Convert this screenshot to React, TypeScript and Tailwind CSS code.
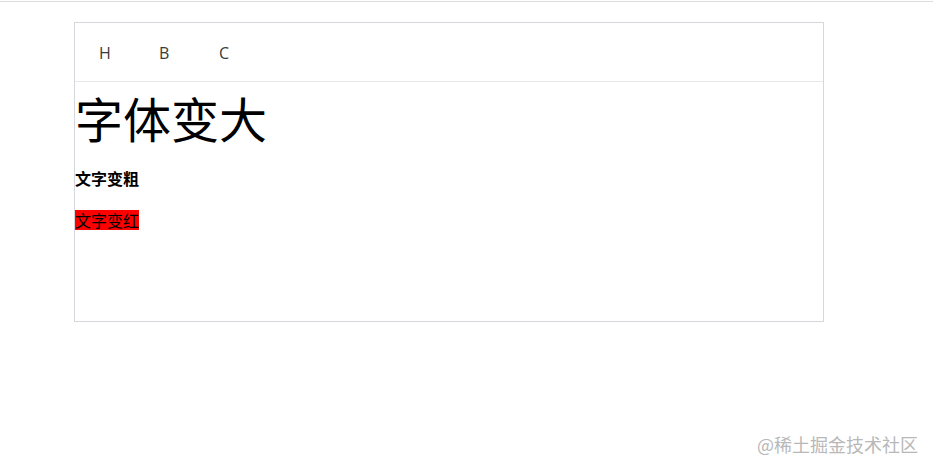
export default function App() {
  const tools = ['H', 'B', 'C']

  return (
    <div className="relative h-[471px] w-[933px] overflow-hidden bg-white font-['Noto_Sans_CJK_SC',sans-serif]">
      <div className="mt-px h-px w-full bg-[#dcdcdc]" />
      <div className="ml-[74px] mt-5 h-[300px] w-[750px] border border-[#d4d8dc]">
        <div className="flex h-[59px] items-center border-b border-[#e8e8e8] pt-[2px] pl-[24px]">
          {tools.map((t) => (
            <span
              key={t}
              className="w-[60px] font-['Open_Sans',sans-serif] text-[16px] font-normal text-[#3a3a3a]"
            >
              {t}
            </span>
          ))}
        </div>
        <div className="text-black">
          <h1 className="mt-[11px] text-[48px] leading-[48px] font-normal">字体变大</h1>
          <p className="mt-[25px] text-[16px] leading-[24px] font-bold">文字变粗</p>
          <p className="mt-[20px] text-[16px] leading-[20px]">
            <span className="inline-block h-[20px] bg-[#ff0000] leading-[20px]">文字变红</span>
          </p>
        </div>
      </div>
      <div className="absolute right-[15px] bottom-[16px] text-[18px] leading-[22px] text-[#b8b8b8]">
        @稀土掘金技术社区
      </div>
    </div>
  )
}
